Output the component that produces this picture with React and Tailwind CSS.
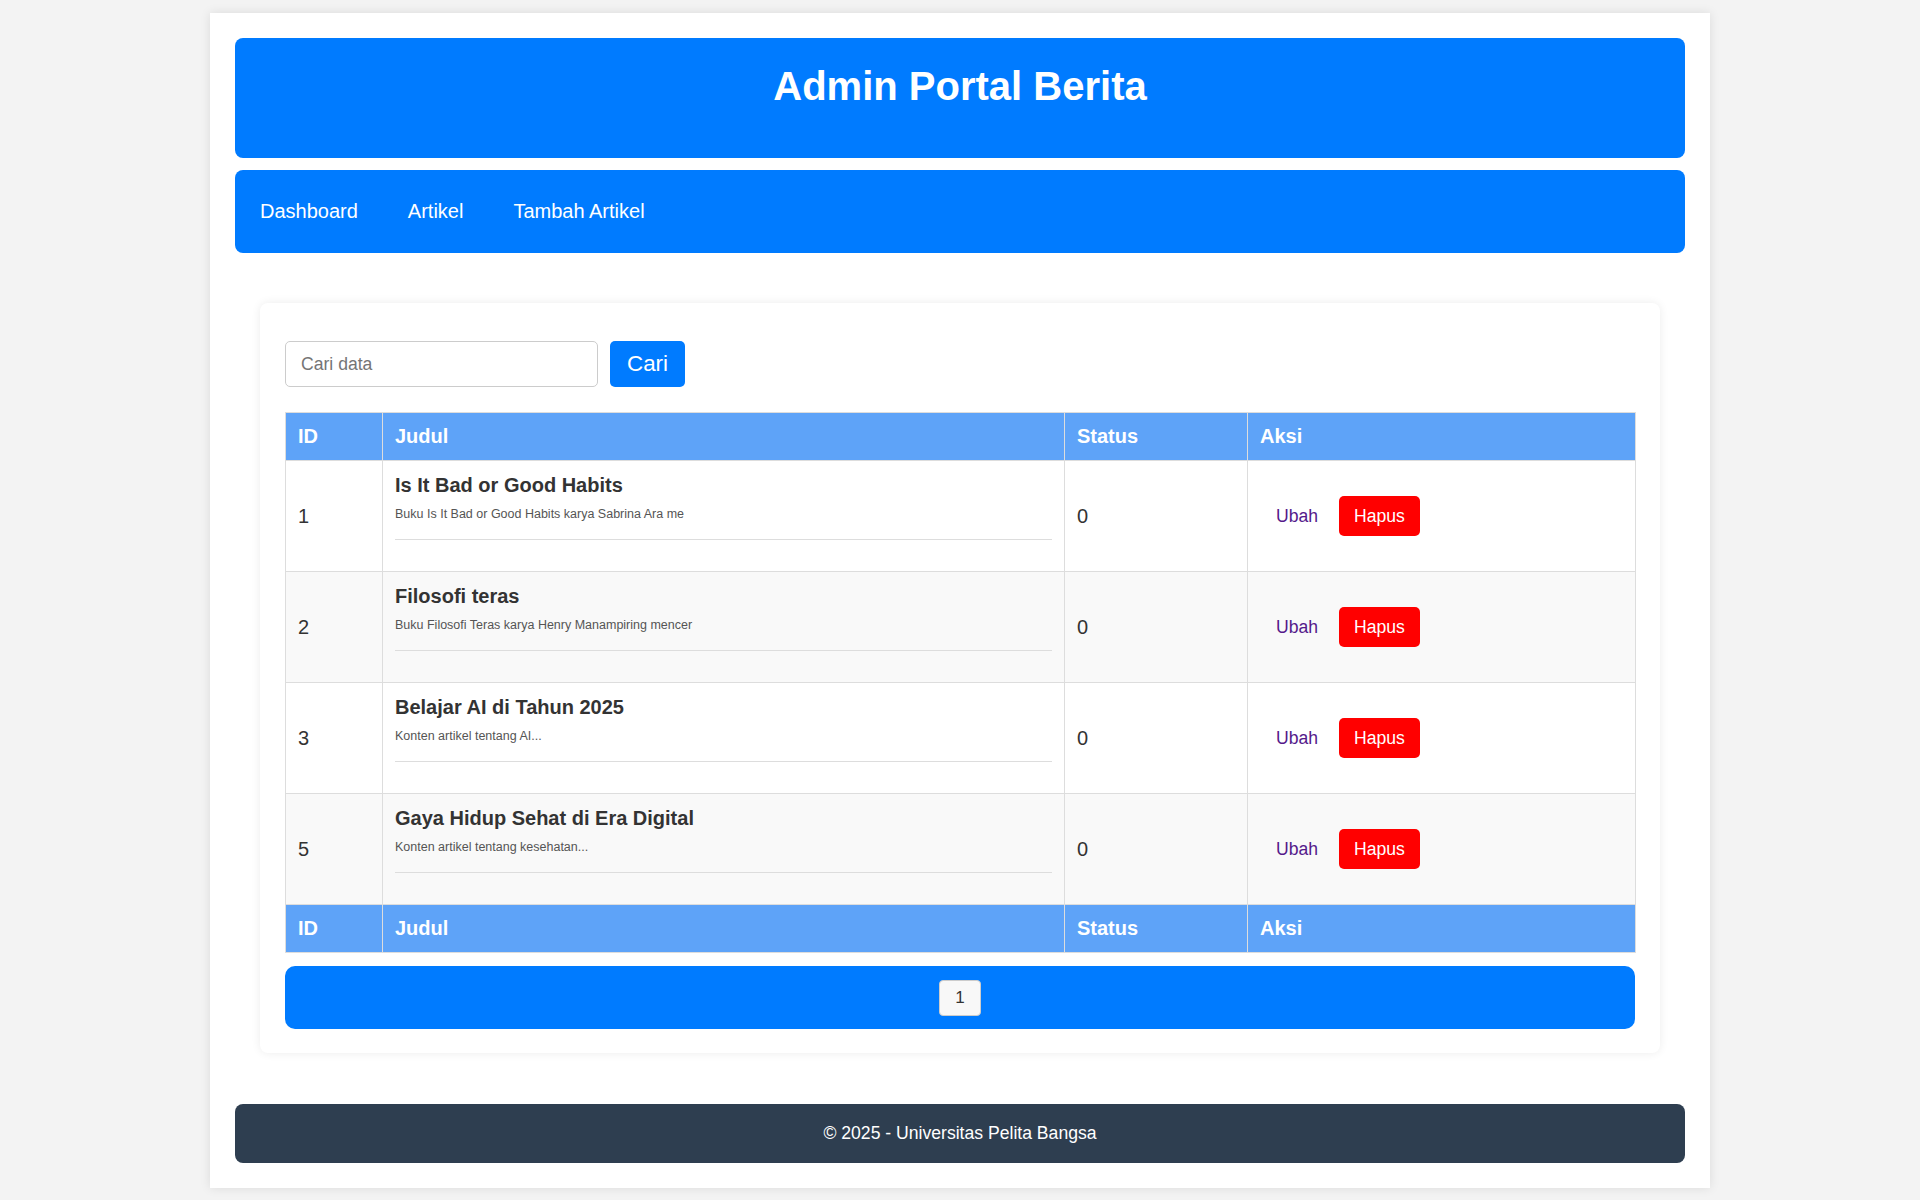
const articles = [
    { id: 1, title: "Is It Bad or Good Habits", desc: "Buku Is It Bad or Good Habits karya Sabrina Ara me" },
    { id: 2, title: "Filosofi teras", desc: "Buku Filosofi Teras karya Henry Manampiring mencer" },
    { id: 3, title: "Belajar AI di Tahun 2025", desc: "Konten artikel tentang AI..." },
    { id: 5, title: "Gaya Hidup Sehat di Era Digital", desc: "Konten artikel tentang kesehatan..." },
];

export default function App() {
    return (
        <div className="min-h-screen bg-[#f3f3f3] pt-[13px] pb-[12px] font-['Liberation_Sans',Arial,sans-serif] text-[#333]">
            <div className="mx-auto w-[1500px] bg-white px-[25px] py-[25px] shadow-[0_0_10px_rgba(0,0,0,0.1)]">
                {/* Header */}
                <header className="h-[120px] rounded-lg bg-[#007bff] pt-[26px] text-center">
                    <h1 className="text-[40px] font-bold leading-[45px] text-white">Admin Portal Berita</h1>
                </header>

                {/* Nav */}
                <nav className="mt-[12px] flex h-[83px] items-center rounded-lg bg-[#007bff] pb-[2px]">
                    <NavItem label="Dashboard" />
                    <NavItem label="Artikel" />
                    <NavItem label="Tambah Artikel" />
                </nav>

                {/* Content */}
                <section className="px-[25px] pt-[50px] pb-[51px]">
                    <div className="rounded-lg bg-white px-[25px] pt-[38px] pb-[24px] shadow-[0_0_10px_rgba(0,0,0,0.08)]">
                        <form className="flex items-center gap-[12px]" onSubmit={(e) => e.preventDefault()}>
                            <input
                                type="text"
                                placeholder="Cari data"
                                className="h-[46px] w-[313px] rounded-[5px] border border-[#ccc] px-[15px] text-[17.6px] text-[#333] placeholder:text-[#757575] outline-none"
                            />
                            <button className="h-[46px] rounded-[5px] bg-[#007bff] px-[17px] text-[22.4px] text-white">
                                Cari
                            </button>
                        </form>

                        <table className="mt-[25px] w-[1350px] table-fixed border-collapse text-[17.6px]">
                            <thead>
                                <HeadRow />
                            </thead>
                            <tbody>
                                {articles.map((a, i) => (
                                    <tr key={a.id} className={i % 2 === 1 ? "bg-[#f9f9f9]" : "bg-white"}>
                                        <td className="border border-[#ddd] px-[12px] align-middle text-[20px]">{a.id}</td>
                                        <td className="border border-[#ddd] px-[12px] pt-[13px] pb-[11px] align-top">
                                            <h3 className="text-[20px] font-bold leading-[23px] text-[#333]">{a.title}</h3>
                                            <p className="mt-[10px] text-[12.5px] leading-[14px] text-[#555]">{a.desc}</p>
                                            <hr className="mt-[18px] mb-[20px] border-t border-[#ddd]" />
                                        </td>
                                        <td className="border border-[#ddd] px-[12px] align-middle text-[20px]">0</td>
                                        <td className="border border-[#ddd] px-[12px] align-middle">
                                            <div className="flex items-center gap-[5px]">
                                                <a href="#" className="px-[16px] text-[#551a8b]">Ubah</a>
                                                <a href="#" className="flex h-[40px] items-center rounded-[5px] bg-[#ff0000] px-[15px] text-white">
                                                    Hapus
                                                </a>
                                            </div>
                                        </td>
                                    </tr>
                                ))}
                            </tbody>
                            <tfoot>
                                <HeadRow />
                            </tfoot>
                        </table>

                        <div className="mt-[13px] flex h-[63px] items-center justify-center rounded-[10px] bg-[#007bff]">
                            <span className="flex h-[36px] w-[42px] items-center justify-center rounded-[4px] border border-[#ccc] bg-[#f8f8f8] text-[17px] text-[#333]">
                                1
                            </span>
                        </div>
                    </div>
                </section>

                {/* Footer */}
                <footer className="flex h-[59px] items-center justify-center rounded-lg bg-[#2e3e50] text-[17.6px] text-white">
                    © 2025 - Universitas Pelita Bangsa
                </footer>
            </div>
        </div>
    );
}

function HeadRow() {
    return (
        <tr className="bg-[#5ea3f8] text-left text-[20px] font-bold text-white">
            <th className="w-[97px] border border-[#ddd] px-[12px] py-[12px] leading-[23px]">ID</th>
            <th className="w-[682px] border border-[#ddd] px-[12px] py-[12px] leading-[23px]">Judul</th>
            <th className="w-[183px] border border-[#ddd] px-[12px] py-[12px] leading-[23px]">Status</th>
            <th className="w-[388px] border border-[#ddd] px-[12px] py-[12px] leading-[23px]">Aksi</th>
        </tr>
    );
}

function NavItem({ label }) {
    return (
        <a href="#" className="px-[25px] text-[20px] text-white">
            {label}
        </a>
    );
}
